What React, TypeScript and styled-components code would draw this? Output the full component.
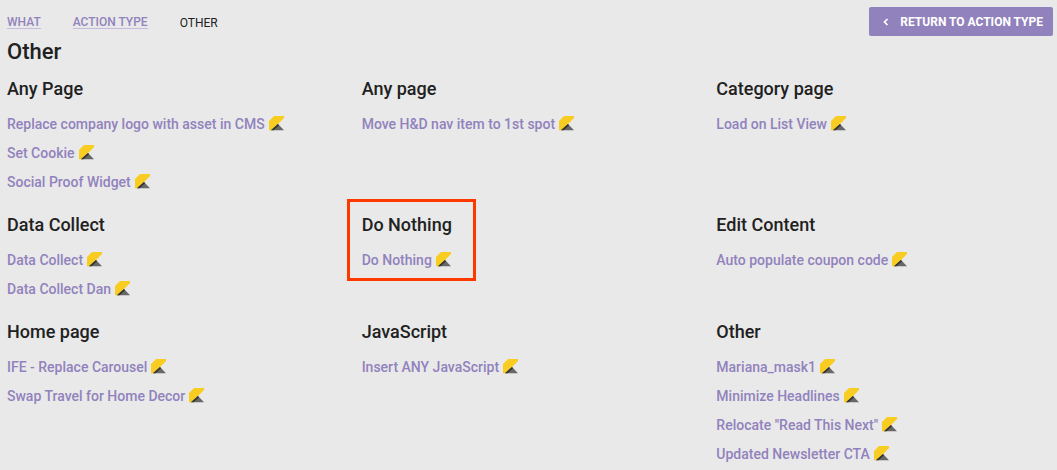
import React from "react";
import styled, { createGlobalStyle, css } from "styled-components";

const GlobalStyle = createGlobalStyle`
  * { box-sizing: border-box; }
  body {
    margin: 0;
    background: #e9e9e9;
    color: #212121;
    font-family: Roboto, "Liberation Sans", sans-serif;
  }
`;

const Page = styled.main`
  padding: 7px 4px 0 7px;
`;

const TopBar = styled.header`
  display: flex;
  justify-content: space-between;
  align-items: flex-start;
`;

const Crumbs = styled.nav`
  display: flex;
  align-items: center;
  gap: 32px;
  height: 30px;
  font-size: 12px;
  line-height: 14px;
  text-transform: uppercase;
`;

const CrumbLink = styled.a`
  color: #9182bd;
  font-weight: 500;
  text-decoration: none;
  box-shadow: inset 0 -1px 0 #c4bbdd;
`;

const CurrentCrumb = styled.span`
  padding-top: 1px;
`;

const ReturnButton = styled.button`
  display: flex;
  align-items: center;
  gap: 10px;
  height: 29px;
  padding: 0 10px 0 13px;
  border: 0;
  border-radius: 2px;
  background: #9182bd;
  color: #fff;
  font: 700 12px/14px Roboto, "Liberation Sans", sans-serif;
  text-transform: uppercase;
  cursor: pointer;
`;

const PageTitle = styled.h1`
  margin: 0 0 10px;
  font-size: 22px;
  font-weight: 500;
  line-height: 30px;
`;

const Grid = styled.div`
  display: grid;
  grid-template-columns: repeat(3, minmax(0, 1fr));
  gap: 16px 18px;
`;

const Group = styled.section<{ $highlighted?: boolean }>`
  position: relative;
  justify-self: start;
  align-self: start;
  ${(p) =>
    p.$highlighted &&
    css`
      &::after {
        content: "";
        position: absolute;
        inset: -14px -24px -6px -15px;
        border: 3px solid #ff3800;
        pointer-events: none;
      }
    `}
`;

const GroupTitle = styled.h2`
  margin: 0 0 8px;
  font-size: 18px;
  font-weight: 500;
  line-height: 24px;
`;

const ActionList = styled.ul`
  margin: 0;
  padding: 0 0 1px;
  list-style: none;
`;

const ActionItem = styled.li`
  display: flex;
  align-items: center;
  gap: 4px;
  height: 29px;
`;

const ActionLink = styled.a`
  color: #9182bd;
  font-size: 14px;
  font-weight: 500;
  line-height: 20px;
  text-decoration: none;
  white-space: nowrap;
`;

const Mark = styled.svg`
  display: block;
  flex: none;
`;

const BrandMark = () => (
  <Mark width="15" height="15" viewBox="0 0 15 15" aria-hidden="true">
    <path d="M5 0H15V2L3 14.3H0V5Z" fill="#f9cc22" />
    <path d="M9 8L15 14.3H2Z" fill="#666766" />
    <path d="M9 8L10 9.2L4.5 14.3H2Z" fill="#333432" />
  </Mark>
);

const groups: { title: string; actions: string[]; highlighted?: boolean }[] = [
  {
    title: "Any Page",
    actions: ["Replace company logo with asset in CMS", "Set Cookie", "Social Proof Widget"],
  },
  { title: "Any page", actions: ["Move H&D nav item to 1st spot"] },
  { title: "Category page", actions: ["Load on List View"] },
  { title: "Data Collect", actions: ["Data Collect", "Data Collect Dan"] },
  { title: "Do Nothing", actions: ["Do Nothing"], highlighted: true },
  { title: "Edit Content", actions: ["Auto populate coupon code"] },
  { title: "Home page", actions: ["IFE - Replace Carousel", "Swap Travel for Home Decor"] },
  { title: "JavaScript", actions: ["Insert ANY JavaScript"] },
  {
    title: "Other",
    actions: ["Mariana_mask1", "Minimize Headlines", 'Relocate "Read This Next"', "Updated Newsletter CTA"],
  },
];

export default function App() {
  return (
    <>
      <GlobalStyle />
      <Page>
        <TopBar>
          <Crumbs aria-label="Breadcrumb">
            <CrumbLink href="#what">What</CrumbLink>
            <CrumbLink href="#action-type">Action type</CrumbLink>
            <CurrentCrumb aria-current="page">Other</CurrentCrumb>
          </Crumbs>
          <ReturnButton type="button">
            <svg width="8" height="8" viewBox="0 0 8 8" aria-hidden="true">
              <path d="M5.5 1L2.5 4L5.5 7" fill="none" stroke="#fff" strokeWidth="1.7" />
            </svg>
            Return to action type
          </ReturnButton>
        </TopBar>
        <PageTitle>Other</PageTitle>
        <Grid>
          {groups.map((group) => (
            <Group key={group.title} $highlighted={group.highlighted}>
              <GroupTitle>{group.title}</GroupTitle>
              <ActionList>
                {group.actions.map((action) => (
                  <ActionItem key={action}>
                    <ActionLink href="#action">{action}</ActionLink>
                    <BrandMark />
                  </ActionItem>
                ))}
              </ActionList>
            </Group>
          ))}
        </Grid>
      </Page>
    </>
  );
}
